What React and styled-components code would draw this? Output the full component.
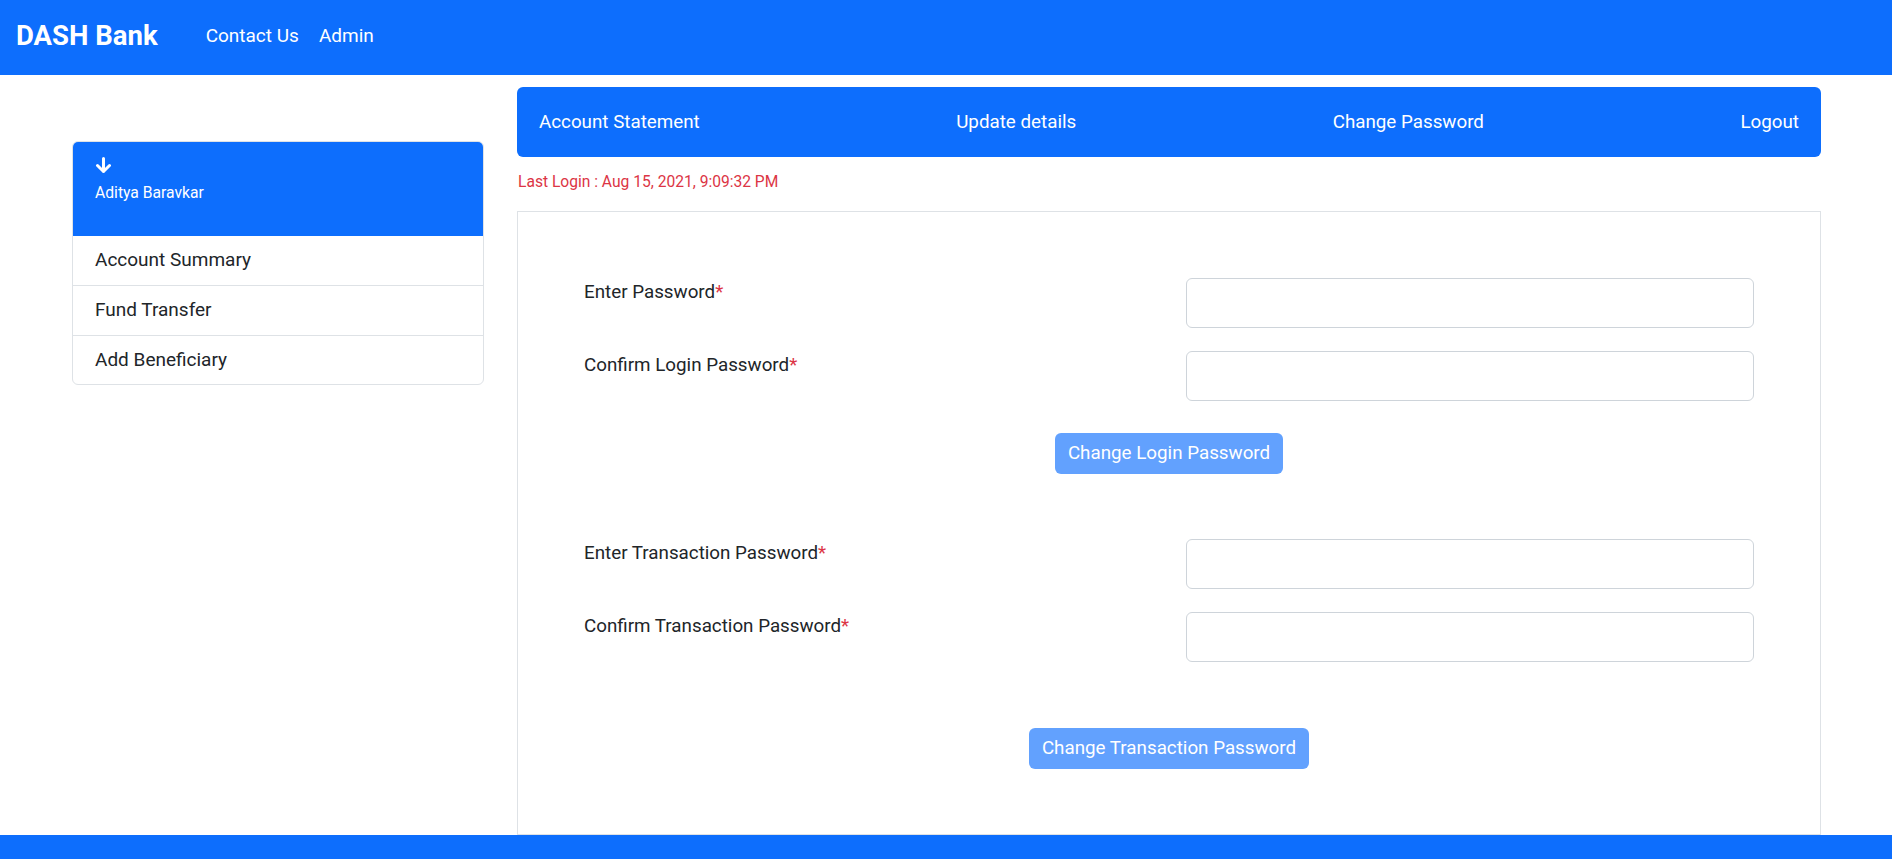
import React from 'react'
import styled, { createGlobalStyle } from 'styled-components'

const GlobalStyle = createGlobalStyle`
  * {
    box-sizing: border-box;
  }
  body {
    margin: 0;
    font-family: Roboto, "Liberation Sans", Arial, sans-serif;
    color: #212529;
    background: #fff;
  }
`

const Page = styled.div`
  display: flex;
  flex-direction: column;
  height: 100vh;
  overflow: hidden;
`

const Navbar = styled.header`
  height: 75px;
  flex-shrink: 0;
  background: #0d6efd;
  display: flex;
  align-items: center;
  padding: 0 16px 5px;
  color: #fff;
`
const Brand = styled.a`
  font-size: 27.5px;
  font-weight: 700;
  color: #fff;
  text-decoration: none;
  margin-right: 48px;
`
const NavLinks = styled.nav`
  display: flex;
  gap: 20px;
`
const NavLink = styled.a`
  font-size: 19px;
  color: #fff;
  text-decoration: none;
`

const Main = styled.main`
  flex: 1;
  display: grid;
  grid-template-columns: 412px 1fr;
  column-gap: 33px;
  align-items: start;
  padding: 12px 71px 0 72px;
`

const Sidebar = styled.aside`
  margin-top: 54px;
  border: 1px solid #dee2e6;
  border-radius: 6px;
  overflow: hidden;
`
const SideHeader = styled.div`
  background: #0d6efd;
  color: #fff;
  padding: 15px 22px 31px;
`
const Arrow = styled.svg`
  display: block;
  margin: 0 0 8px 0;
`
const UserName = styled.div`
  font-size: 15.7px;
  font-weight: 400;
  line-height: 24px;
`
const SideItem = styled.a`
  display: block;
  font-size: 19px;
  line-height: 28.8px;
  padding: 10px 22px;
  color: #212529;
  text-decoration: none;
  & + & {
    border-top: 1px solid #dee2e6;
  }
`

const Content = styled.section`
  display: flex;
  flex-direction: column;
`
const TopNav = styled.nav`
  height: 70px;
  background: #0d6efd;
  border-radius: 6px;
  display: flex;
  align-items: center;
  justify-content: space-between;
  padding: 0 22px;
`
const TopLink = styled.a`
  font-size: 18.8px;
  color: #fff;
  text-decoration: none;
`
const LastLogin = styled.div`
  color: #dc3545;
  font-size: 15.6px;
  line-height: 24px;
  margin: 13px 0 17px 1px;
`
const FormCard = styled.div`
  border: 1px solid #dee2e6;
  padding: 66px 66px 65px;
`
const FormSection = styled.div`
  display: flex;
  flex-direction: column;
  gap: 23px;
  margin-top: ${(p) => p.$top || 0}px;
`
const Row = styled.div`
  display: grid;
  grid-template-columns: 1fr 1fr;
  column-gap: 34px;
  align-items: start;
`
const Label = styled.label`
  font-size: 18.8px;
  line-height: 28.8px;
`
const Req = styled.span`
  color: #dc3545;
`
const Input = styled.input`
  height: 50px;
  width: 100%;
  border: 1px solid #ced4da;
  border-radius: 6px;
  padding: 8px 16px;
  font: inherit;
`
const ButtonRow = styled.div`
  display: flex;
  justify-content: center;
  margin-top: ${(p) => p.$top}px;
`
const Button = styled.button`
  font-family: inherit;
  font-size: 18.8px;
  line-height: 28.8px;
  padding: 5px 12px;
  border: 1px solid transparent;
  border-radius: 6px;
  background: #62a1fe;
  color: #fff;
  cursor: default;
`

const Footer = styled.footer`
  height: 24px;
  flex-shrink: 0;
  background: #0d6efd;
`

const Field = ({ label }) => (
  <Row>
    <Label>
      {label}
      <Req>*</Req>
    </Label>
    <Input type="password" />
  </Row>
)

const App = () => {
  return (
    <Page>
      <GlobalStyle />
      <Navbar>
        <Brand href="#">DASH Bank</Brand>
        <NavLinks>
          <NavLink href="#">Contact Us</NavLink>
          <NavLink href="#">Admin</NavLink>
        </NavLinks>
      </Navbar>

      <Main>
        <Sidebar>
          <SideHeader>
            <Arrow width="17" height="16" viewBox="0 0 17 16">
              <path
                d="M8.5 1.5V14.5M2.5 8.5L8.5 14.5L14.5 8.5"
                fill="none"
                stroke="#fff"
                strokeWidth="3"
                strokeLinecap="round"
                strokeLinejoin="round"
              />
            </Arrow>
            <UserName>Aditya Baravkar</UserName>
          </SideHeader>
          <SideItem href="#">Account Summary</SideItem>
          <SideItem href="#">Fund Transfer</SideItem>
          <SideItem href="#">Add Beneficiary</SideItem>
        </Sidebar>

        <Content>
          <TopNav>
            <TopLink href="#">Account Statement</TopLink>
            <TopLink href="#">Update details</TopLink>
            <TopLink href="#">Change Password</TopLink>
            <TopLink href="#">Logout</TopLink>
          </TopNav>
          <LastLogin>Last Login : Aug 15, 2021, 9:09:32 PM</LastLogin>

          <FormCard>
            <FormSection>
              <Field label="Enter Password" />
              <Field label="Confirm Login Password" />
            </FormSection>
            <ButtonRow $top={32}>
              <Button disabled>Change Login Password</Button>
            </ButtonRow>

            <FormSection $top={65}>
              <Field label="Enter Transaction Password" />
              <Field label="Confirm Transaction Password" />
            </FormSection>
            <ButtonRow $top={66}>
              <Button disabled>Change Transaction Password</Button>
            </ButtonRow>
          </FormCard>
        </Content>
      </Main>

      <Footer />
    </Page>
  )
}

export default App
